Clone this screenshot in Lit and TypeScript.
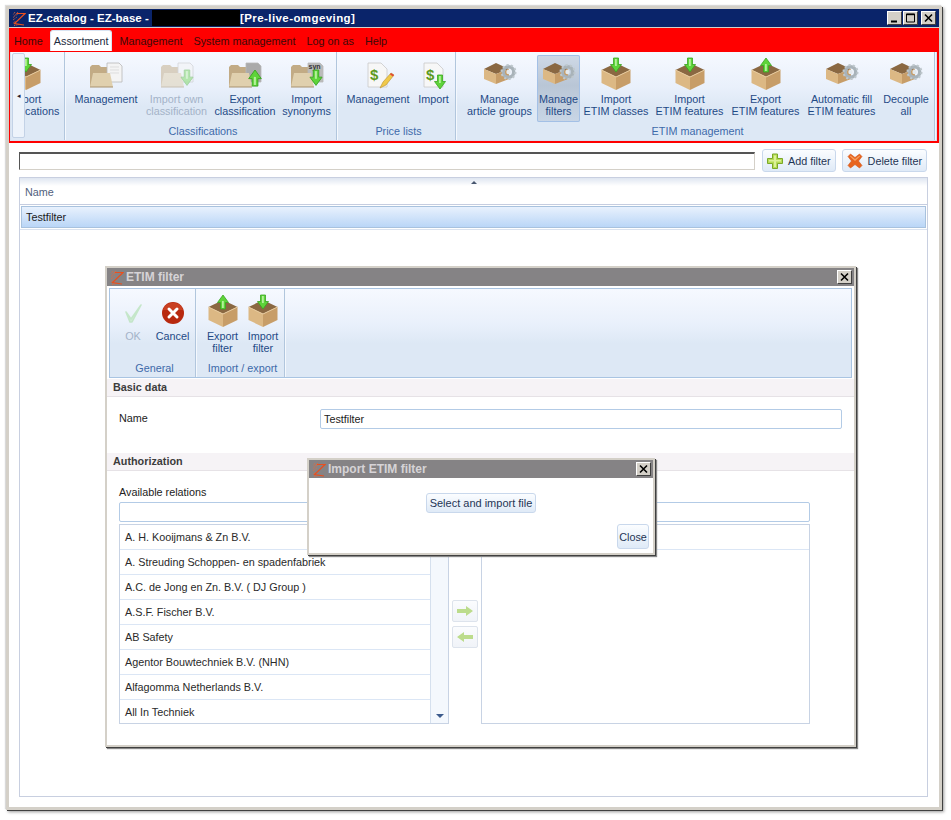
import { LitElement, html, css, svg } from 'lit';
import { customElement } from 'lit/decorators.js';

// small icon pieces, all drawn in a 40x38 box centred on the ribbon button
const arrowDown = (x: number, y: number, s = 1) => svg`<path transform="translate(${x} ${y}) scale(${s})" d="M-2.5 0H2.5V6.5H5.5L0 14L-5.5 6.5H-2.5Z" fill="#5ed43a" stroke="#39a421" stroke-width=".8"/><path transform="translate(${x} ${y}) scale(${s})" d="M-1 1H.8V8H-1Z" fill="#b4f09a"/>`;
const arrowUp = (x: number, y: number, s = 1) => svg`<path transform="translate(${x} ${y}) scale(${s})" d="M-2.5 14H2.5V7.5H5.5L0 0L-5.5 7.5H-2.5Z" fill="#5ed43a" stroke="#39a421" stroke-width=".8"/><path transform="translate(${x} ${y}) scale(${s})" d="M-1 13H.8V6H-1Z" fill="#b4f09a"/>`;

const bigBox = (arrow: any) => svg`<svg class="ico" viewBox="0 0 40 38">
  <path d="M5.5 15L20 8L34.5 15L20 22Z" fill="#8a6842"/>
  <path d="M5.5 15L20 22V35L5.5 28Z" fill="#dcb884"/>
  <path d="M34.5 15L20 22V35L34.5 28Z" fill="#c79d68"/>
  <path d="M5.5 15L20 22L34.5 15" fill="none" stroke="#e8cb9e" stroke-width="1"/>
  ${arrow}
</svg>`;

const gearBox = () => svg`<svg class="ico" viewBox="0 0 40 38">
  <path d="M4 14L16 8L29 14L16 19Z" fill="#8a6842"/>
  <path d="M4 14L16 19V29L4 24Z" fill="#dcb884"/>
  <path d="M29 14L16 19V29L29 24Z" fill="#c79d68"/>
  <circle cx="28.5" cy="17" r="5.2" fill="none" stroke="#a9b3b9" stroke-width="3.4"/>
  <circle cx="28.5" cy="17" r="7" fill="none" stroke="#bfc8cd" stroke-width="2" stroke-dasharray="2.2 2.2"/>
  <circle cx="28.5" cy="17" r="2.2" fill="#e4e9ed"/>
</svg>`;

const folder = (overlay: any, docFill = '#f4f4f4') => svg`<svg class="ico" viewBox="0 0 40 38">
  <path d="M4 12L6 10H13L15 12H26V32H4Z" fill="#c2ab85"/>
  <path d="M21 8H33L36 11V27H21Z" fill="${docFill}" stroke="#b8b8b8" stroke-width=".8"/>
  <path d="M4 32L7 18H24L27 32Z" fill="#e0d0ae"/>
  <path d="M4 32H27" stroke="#a89270"/>
  ${overlay}
</svg>`;

const dollarDoc = (extra: any, x = 10) => svg`<svg class="ico" viewBox="0 0 40 38">
  <path d="M${x} 8H${x + 13}L${x + 19} 14V32H${x}Z" fill="#f7f7f7" stroke="#c9c9c9" stroke-width=".8"/>
  <text x="${x + 2}" y="25" font-family="Liberation Sans, sans-serif" font-weight="700" font-size="15" fill="#5d9a1d">$</text>
  ${extra}
</svg>`;

const pencil = svg`<path d="M22 33L25 27L33 18L36 20L28 30Z" fill="#f0c94a" stroke="#b88f2a" stroke-width=".6"/><path d="M33 18L36 20L35 21.5L32 19.5Z" fill="#e0483a"/>`;

const logo = (cls: string) => svg`<svg class=${cls} viewBox="0 0 14 15">
  <path d="M1 6.5L7 2M1 9L5 6M3 1L1 4M1.5 12L3.5 10M2 14.5L7 13.5M6 1L2 5" fill="none" stroke="#e9693a" stroke-width=".9" stroke-dasharray="1 .8"/>
  <path d="M5 2.5H13L2.5 12.5L12 14" fill="none" stroke="#e8501f" stroke-width="1.2"/>
</svg>`;

const check = svg`<svg class="ico" viewBox="0 0 40 38"><path d="M13 20L18 27L28 13L19 30H17Z" fill="#b5e6b0" stroke="#9edb98" stroke-width="1.6" stroke-linejoin="round"/></svg>`;
const cancel = svg`<svg class="ico" viewBox="0 0 40 38"><circle cx="20" cy="21" r="11" fill="#b8290f"/><path d="M10 18A10.5 10.5 0 0 1 30 18Z" fill="#d4502f" opacity=".6"/><path d="M16 17L24 25M24 17L16 25" stroke="#fff" stroke-width="3" stroke-linecap="round"/></svg>`;
const plusIcon = svg`<svg class="bt-ico" viewBox="0 0 16 16"><path d="M5.5 1H10.5V5.5H15.5V10.5H10.5V15.5H5.5V10.5H.5V5.5H5.5Z" fill="#b6dc55" stroke="#7ba82a"/><path d="M7 2.5H9V7H14V8.5H9V14H7V8.5H2V7H7Z" fill="#dcf09a"/></svg>`;
const crossIcon = svg`<svg class="bt-ico" viewBox="0 0 16 16"><path d="M3.5 1L8 4.5L12.5 1L15 3.5L11.5 8L15 12.5L12.5 15L8 11.5L3.5 15L1 12.5L4.5 8L1 3.5Z" fill="#e8641e" stroke="#d0561a" stroke-width=".6"/><path d="M3.5 2.5L8 6L12.5 2.5L13 3.5L8 8L3 3.5Z" fill="#f5a060"/></svg>`;

const impBox = bigBox(arrowDown(20, 3));
const expBox = bigBox(arrowUp(20, 3));
const paleArrow = svg`<g opacity=".8">${arrowDown(30, 15, 1.1)}</g>`;

type Btn = { t: string[]; w: number; icon: any; off?: boolean; on?: boolean };
type Group = { name: string; items: Btn[] };

const groups: Group[] = [
  {
    name: 'Classifications', items: [
      { t: ['Management'], w: 70, icon: folder(svg`<path d="M24 12H33M24 15H33M24 18H33" stroke="#ddd"/>`) },
      { t: ['Import own', 'classification'], w: 71, icon: folder(paleArrow), off: true },
      { t: ['Export', 'classification'], w: 66, icon: folder(svg`${arrowUp(30, 15, 1.15)}`, '#aaa') },
      { t: ['Import', 'synonyms'], w: 57, icon: folder(svg`<text x="21.5" y="14" font-family="Liberation Sans, sans-serif" font-size="7" font-weight="700" fill="#333">syn</text>${arrowDown(29, 15, 1.1)}`, '#bbb') },
    ],
  },
  {
    name: 'Price lists', items: [
      { t: ['Management'], w: 70, icon: dollarDoc(pencil) },
      { t: ['Import'], w: 41, icon: dollarDoc(arrowDown(26, 20, 1)) },
    ],
  },
  {
    name: 'ETIM management', items: [
      { t: ['Manage', 'article groups'], w: 75, icon: gearBox() },
      { t: ['Manage', 'filters'], w: 43, icon: gearBox(), on: true },
      { t: ['Import', 'ETIM classes'], w: 72, icon: impBox },
      { t: ['Import', 'ETIM features'], w: 75, icon: impBox },
      { t: ['Export', 'ETIM features'], w: 77, icon: expBox },
      { t: ['Automatic fill', 'ETIM features'], w: 75, icon: gearBox() },
      { t: ['Decouple', 'all'], w: 54, icon: gearBox() },
    ],
  },
];

const dialogGroups: Group[] = [
  {
    name: 'General', items: [
      { t: ['OK'], w: 36, icon: check, off: true },
      { t: ['Cancel'], w: 43, icon: cancel },
    ],
  },
  {
    name: 'Import / export', items: [
      { t: ['Export', 'filter'], w: 41, icon: expBox },
      { t: ['Import', 'filter'], w: 40, icon: impBox },
    ],
  },
];

const relations = [
  'A. H. Kooijmans & Zn B.V.',
  'A. Streuding Schoppen- en spadenfabriek',
  'A.C. de Jong en Zn. B.V. ( DJ Group )',
  'A.S.F. Fischer B.V.',
  'AB Safety',
  'Agentor Bouwtechniek B.V. (NHN)',
  'Alfagomma Netherlands B.V.',
  'All In Techniek',
];

const tabs = ['Home', 'Assortment', 'Management', 'System management', 'Log on as', 'Help'];

@customElement('app-root')
export class AppRoot extends LitElement {
  static styles = css`
    :host {
      display: block;
      position: relative;
      width: 951px;
      height: 820px;
      box-sizing: border-box;
      padding: 6px 9px 10px 6px;
      background: #fff;
      font-family: "Liberation Sans", Arial, sans-serif;
      font-size: 10.8px;
      color: #222;
    }
    .win {
      height: 100%;
      box-sizing: border-box;
      display: flex;
      flex-direction: column;
      background: #fff;
      border: 3px solid #d4d0c8;
      box-shadow: 1px 1px 0 #404040, 2px 2px 3px #999, -1px -1px 1px #ddd;
    }
    .title {
      height: 18px;
      flex: none;
      display: flex;
      align-items: center;
      padding-left: 3px;
      background: #0a246a;
      border-bottom: 1px solid #d4d0c8;
      color: #fff;
      font-weight: 700;
      font-size: 11.5px;
      white-space: pre;
    }
    .env { letter-spacing: .42px; }
    .logo { width: 14px; height: 15px; margin-right: 2px; flex: none; }
    .redact { width: 88px; height: 16px; background: #000; }
    .ctl { margin-left: auto; display: flex; gap: 1px; padding-right: 3px; }
    .ctl-b {
      width: 15px;
      height: 14px;
      box-sizing: border-box;
      background: #d4d0c8;
      border: 1px solid;
      border-color: #fff #404040 #404040 #fff;
      display: block;
    }
    .ctl-b svg { display: block; width: 13px; height: 12px; }
    .ctl-b:last-child { margin-left: 2px; }
    .menu { flex: none; background: #f00; padding: 2px 2px 2px 1px; }
    .tabs { display: flex; gap: 3px; height: 21px; margin-bottom: 1px; }
    .tab { padding: 0 4px; line-height: 22px; color: #3b0a0a; }
    .tab.on {
      background: #fff;
      color: #1c2a3e;
      border: 1px solid #d9e4f2;
      border-bottom: 0;
      border-radius: 3px 3px 0 0;
      padding: 0 3px;
      line-height: 21px;
    }
    .ribbon {
      display: flex;
      height: 89px;
      box-sizing: border-box;
      padding-left: 1px;
      background: linear-gradient(#f6f9ff 0%, #e9f0fb 40%, #dde8f5 62%, #dde8f5 100%);
      border: 1px solid #d6e1f0;
      border-top: 0;
    }
    .dlg-ribbon { margin: 2px 2px 1px; height: 90px; flex: none; border: 1px solid #a9c4e2; padding-left: 0; }
    .scroll {
      width: 13px;
      flex: none;
      margin: 1px 0 2px;
      box-sizing: border-box;
      background: #edf3fb;
      border: 1px solid #c3d2e6;
      border-radius: 2px;
      display: flex;
      align-items: center;
      justify-content: center;
      font-size: 7px;
      color: #223;
    }
    .group {
      flex: none;
      display: flex;
      flex-direction: column;
      padding: 3px 1px 0 5px;
      border-right: 1px solid #b1c6dd;
      margin-right: 1px;
      box-shadow: 1px 0 0 #f4f8fd;
    }
    .clip { width: 40px; box-sizing: border-box; padding: 3px 0 0; overflow: hidden; }
    .clip .btns { justify-content: flex-end; }
    .btns { display: flex; height: 69px; flex: none; }
    .rb {
      flex: none;
      display: flex;
      flex-direction: column;
      align-items: center;
      box-sizing: border-box;
      height: 67px;
      color: #1f4a86;
      line-height: 12px;
      text-align: center;
      white-space: nowrap;
    }
    .rb.off { color: #a4b3c8; }
    .rb.off .ico { opacity: .5; }
    .rb.on {
      background: linear-gradient(#cfd9e6, #b9c6d6 45%, #c9d6e6);
      box-shadow: inset 0 0 0 1px #a3c0e6;
      border-radius: 2px;
    }
    /* icon may be wider than its label, the width of the button comes from the data */
    .ico { width: 40px; height: 38px; flex: none; display: block; margin: 0 -15px; }
    .group-name { text-align: center; color: #3e6aaa; line-height: 14px; white-space: nowrap; }
    .body { flex: 1; display: flex; flex-direction: column; min-height: 0; padding: 6px 11px 10px 10px; }
    .bar { display: flex; align-items: center; height: 23px; flex: none; margin-bottom: 5px; }
    .search {
      width: 736px;
      height: 18px;
      box-sizing: border-box;
      border: 1px solid;
      border-color: #555 #d4d0c8 #d4d0c8 #555;
      border-top-width: 2px;
      margin-right: 7px;
      background: #fff;
    }
    .btn {
      display: flex;
      align-items: center;
      justify-content: center;
      box-sizing: border-box;
      border: 1px solid #c9d8ec;
      border-radius: 3px;
      background: linear-gradient(#fbfdff, #dfeaf7);
      color: #1f3555;
      white-space: nowrap;
    }
    .tool { height: 23px; gap: 5px; padding: 0 4px; }
    .tool + .tool { margin-left: 6px; }
    .bt-ico { width: 16px; height: 16px; flex: none; }
    .grid { flex: 1; border: 1px solid #c8cfe0; min-height: 0; }
    .grid-head {
      position: relative;
      height: 27px;
      box-sizing: border-box;
      background: linear-gradient(#dfe6f1, #fff 8px);
      border-bottom: 1px solid #c5cde0;
      padding: 8px 5px 0;
      color: #50607c;
    }
    .sort {
      position: absolute;
      left: 451px;
      top: 3px;
      border: 3px solid transparent;
      border-top: 0;
      border-bottom-color: #47566f;
    }
    .sel {
      height: 22px;
      margin: 1px 1px 0;
      box-sizing: border-box;
      padding-left: 4px;
      line-height: 21px;
      border: 1px solid #a8c2de;
      background: linear-gradient(#e8f1fd, #bad6f7);
      color: #1a1a1a;
    }
    .sel-gap { height: 1px; margin-top: 1px; background: #dbe3ef; }

    .dlg {
      position: absolute;
      box-sizing: border-box;
      display: flex;
      flex-direction: column;
      background: #fff;
      border: 2px solid #d4d0c8;
      box-shadow: 1px 1px 0 #404040, 2px 2px 1px #888;
    }
    .dlg-main { left: 105px; top: 266px; width: 751px; height: 481px; }
    .dlg-file { left: 307px; top: 458px; width: 348px; height: 97px; }
    .dlg-title {
      height: 18px;
      flex: none;
      display: flex;
      align-items: center;
      padding-left: 3px;
      background: #858385;
      color: #d6d3d6;
      font-weight: 700;
      font-size: 12px;
    }
    .dlg-title .x {
      margin-left: auto;
      margin-right: 2px;
      width: 15px;
      height: 14px;
      box-sizing: border-box;
      background: #d4d0c8;
      border: 1px solid;
      border-color: #fff #404040 #404040 #fff;
    }
    .x svg { display: block; width: 13px; height: 12px; }
    .sect {
      height: 18px;
      flex: none;
      box-sizing: border-box;
      padding-left: 6px;
      line-height: 17px;
      font-weight: 700;
      color: #3c3c3c;
      background: #f6f3f6;
      border-bottom: 1px solid #e6e2e6;
    }
    .name-row { display: flex; height: 56px; flex: none; padding: 12px 12px 0; box-sizing: border-box; }
    .name-row label { width: 201px; padding-top: 3px; }
    .inp {
      box-sizing: border-box;
      border: 1px solid #b3cbe6;
      border-radius: 2px;
      background: #fff;
      height: 20px;
      line-height: 18px;
      padding-left: 3px;
      color: #222;
    }
    .name-row .inp { width: 522px; }
    .rel { display: grid; grid-template-columns: 330px 32px 329px; padding: 14px 0 0 12px; row-gap: 2px; }
    .rel-label { grid-column: 1 / 4; height: 15px; line-height: 14px; }
    .rel-spacer { min-width: 0; }
    .list { display: flex; height: 200px; box-sizing: border-box; border: 1px solid #c8d3e4; overflow: hidden; }
    .rows { flex: 1; min-width: 0; }
    .row {
      height: 25px;
      box-sizing: border-box;
      padding-left: 5px;
      line-height: 24px;
      border-bottom: 1px solid #dbe6f5;
      white-space: nowrap;
      color: #2a2a2a;
    }
    .row:last-child { border-bottom: 0; }
    .list.right .row:last-child { border-bottom: 1px solid #dbe6f5; }
    .sb {
      width: 18px;
      flex: none;
      display: flex;
      align-items: flex-end;
      justify-content: center;
      padding-bottom: 5px;
      box-sizing: border-box;
      background: #f4f8fd;
      border-left: 1px solid #d5e0ee;
    }
    .sb i { border: 4px solid transparent; border-bottom: 0; border-top-color: #3c5a8c; }
    .move { display: flex; flex-direction: column; align-items: center; justify-content: center; gap: 4px; }
    .mv {
      width: 26px;
      height: 22px;
      box-sizing: border-box;
      border: 1px solid #dde3ec;
      border-radius: 2px;
      background: linear-gradient(#fbfcfe, #f0f3f8);
      display: flex;
      align-items: center;
      justify-content: center;
    }
    .mv svg { width: 18px; height: 12px; }
    .file-body { flex: 1; display: flex; flex-direction: column; padding: 15px 4px 4px; min-height: 0; }
    .pick { align-self: center; height: 20px; padding: 0 3px; font-size: 11px; }
    .close { align-self: flex-end; margin-top: auto; width: 32px; height: 25px; }
  `;

  rbtn(b: Btn) {
    return html`<div class="rb ${b.off ? 'off' : ''} ${b.on ? 'on' : ''}" style="width:${b.w}px">
      ${b.icon}
      ${b.t.map((l) => html`<div>${l}</div>`)}
    </div>`;
  }

  group(g: Group) {
    return html`<div class="group">
      <div class="btns">${g.items.map((b) => this.rbtn(b))}</div>
      <div class="group-name">${g.name}</div>
    </div>`;
  }

  closeX() {
    return html`<div class="x"><svg viewBox="0 0 13 12"><path d="M3 2.5L10 9.5M10 2.5L3 9.5" stroke="#000" stroke-width="1.6"/></svg></div>`;
  }

  render() {
    return html`
      <div class="win">
        <div class="title">
          ${logo('logo')}<span>EZ-catalog - EZ-base - </span><span class="redact"></span><span class="env">[Pre-live-omgeving]</span>
          <div class="ctl">
            <div class="ctl-b"><svg viewBox="0 0 13 12"><path d="M3 9.5H9" stroke="#000" stroke-width="2"/></svg></div>
            <div class="ctl-b"><svg viewBox="0 0 13 12"><path d="M2.5 2H10.5V10H2.5Z" fill="none" stroke="#000"/><path d="M2 2.5H11" stroke="#000" stroke-width="1.4"/></svg></div>
            <div class="ctl-b"><svg viewBox="0 0 13 12"><path d="M3 2.5L10 9.5M10 2.5L3 9.5" stroke="#000" stroke-width="1.6"/></svg></div>
          </div>
        </div>
        <div class="menu">
          <div class="tabs">
            ${tabs.map((t) => html`<div class="tab ${t === 'Assortment' ? 'on' : ''}">${t}</div>`)}
          </div>
          <div class="ribbon">
            <div class="scroll">◂</div>
            <div class="group clip">
              <div class="btns">${this.rbtn({ t: ['Import', 'classifications'], w: 76, icon: impBox })}</div>
            </div>
            ${groups.map((g) => this.group(g))}
          </div>
        </div>
        <div class="body">
          <div class="bar">
            <div class="search"></div>
            <div class="btn tool">${plusIcon}Add filter</div>
            <div class="btn tool">${crossIcon}Delete filter</div>
          </div>
          <div class="grid">
            <div class="grid-head">Name<span class="sort"></span></div>
            <div class="sel">Testfilter</div>
            <div class="sel-gap"></div>
          </div>
        </div>
      </div>

      <div class="dlg dlg-main">
        <div class="dlg-title">${logo('logo')}ETIM filter${this.closeX()}</div>
        <div class="ribbon dlg-ribbon">${dialogGroups.map((g) => this.group(g))}</div>
        <div class="sect">Basic data</div>
        <div class="name-row">
          <label>Name</label>
          <div class="inp">Testfilter</div>
        </div>
        <div class="sect">Authorization</div>
        <div class="rel">
          <div class="rel-label">Available relations</div>
          <div class="inp"></div>
          <div class="rel-spacer"></div>
          <div class="inp"></div>
          <div class="list">
            <div class="rows">${relations.map((r) => html`<div class="row">${r}</div>`)}</div>
            <div class="sb"><i></i></div>
          </div>
          <div class="move">
            <div class="mv"><svg viewBox="0 0 18 12"><path d="M1 4H10V1L17 6L10 11V8H1Z" fill="#bcdc8c"/></svg></div>
            <div class="mv"><svg viewBox="0 0 18 12"><path d="M17 4H8V1L1 6L8 11V8H17Z" fill="#bcdc8c"/></svg></div>
          </div>
          <div class="list right"><div class="rows"><div class="row"></div></div></div>
        </div>
      </div>

      <div class="dlg dlg-file">
        <div class="dlg-title">${logo('logo')}Import ETIM filter${this.closeX()}</div>
        <div class="file-body">
          <div class="btn pick">Select and import file</div>
          <div class="btn close">Close</div>
        </div>
      </div>
    `;
  }
}
